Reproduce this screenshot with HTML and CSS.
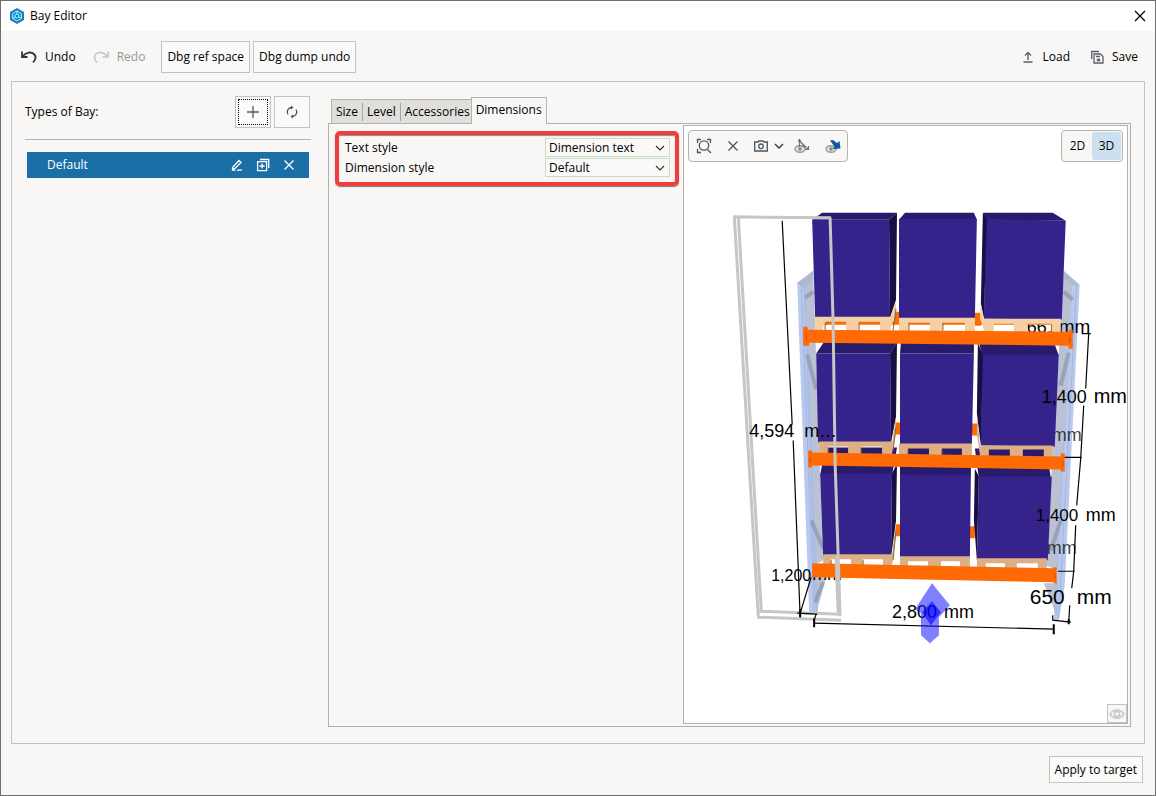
FILE: index.html
```html
<!DOCTYPE html>
<html lang="en">
<head>
<meta charset="utf-8">
<title>Bay Editor</title>
<link rel="stylesheet" href="styles.css">
</head>
<body>
<div class="window">
  <header class="titlebar">
    <svg class="logo" width="16" height="16" viewBox="0 0 16 16"><path d="M8 0l7 4v8l-7 4-7-4V4z" fill="#0d86c4"/><path d="M8 3l4.300 2.500v5L8 13l-4.300-2.500v-5zM8 3v3M3.700 10.500L6 9M12.300 10.500L10 9M8 6l2 1v2l-2 1.200L6 9V7z" fill="none" stroke="#c9e9fa" stroke-width="1"/></svg>
    <h1 class="title">Bay Editor</h1>
    <button class="close" aria-label="Close"><svg width="12" height="12" viewBox="0 0 12 12"><path d="M1 1l10 10M11 1L1 11" fill="none" stroke="#000" stroke-width="1.200"/></svg></button>
  </header>

  <div class="toolbar">
    <button class="flat"><svg width="18" height="16" viewBox="0 0 18 16"><path d="M2 2.500v5.500h5.500M2.500 7.500C6 3 11 2.500 14 5c2.300 2.300 1.800 5.500-1 8.500" fill="none" stroke="#333" stroke-width="1.800"/></svg>Undo</button>
    <button class="flat redo" disabled><svg width="18" height="16" viewBox="0 0 18 16"><path d="M16 2.500v5.500h-5.500M15.500 7.500C12 3 7 2.500 4 5c-2.300 2.300-1.800 5.500 1 8.500" fill="none" stroke="#c6c6c6" stroke-width="1.600"/></svg>Redo</button>
    <div class="debug">
      <button class="btn">Dbg ref space</button>
      <button class="btn">Dbg dump undo</button>
    </div>
    <div class="files">
      <button class="flat"><svg width="14" height="14" viewBox="0 0 14 14"><path d="M7 10V2.500M4 5.500l3-3 3 3M2.500 12h9" fill="none" stroke="#59636b" stroke-width="1.400"/></svg>Load</button>
      <button class="flat"><svg width="14" height="14" viewBox="0 0 14 14"><path d="M1.700 9V1.500H9M4 4h6.500L13 6.500V13H4zM6 6.500h4M7.500 9.500h2v1h-2z" fill="none" stroke="#59636b" stroke-width="1.300"/></svg>Save</button>
    </div>
  </div>

  <main class="frame">
    <section class="types">
      <div class="types-head">
        <h2 class="types-title">Types of Bay:</h2>
        <button class="btn square focused" aria-label="Add"><svg width="14" height="14" viewBox="0 0 14 14"><path d="M7 1v12M1 7h12" stroke="#555b60" stroke-width="1.300"/></svg></button>
        <button class="btn square" aria-label="Refresh"><svg width="14" height="14" viewBox="0 0 14 14"><path d="M6.500 2.500A4.500 4.500 0 0 0 3 9.500M7.500 11.500A4.500 4.500 0 0 0 11 4.500" fill="none" stroke="#4a5257" stroke-width="1.300"/><path d="M6 .5l2.500 2L6 4.500zM8 9.500l-2.500 2 2.500 2z" fill="#4a5257"/></svg></button>
      </div>
      <div class="bay">
        <span class="bay-name">Default</span>
        <button class="icon" aria-label="Rename"><svg width="14" height="14" viewBox="0 0 14 14"><path d="M3 9l6-6.500 2 2L5 10.500l-2.500.5zM2 12.200h3.500M7 12.200h5" fill="none" stroke="#fff" stroke-width="1.300"/></svg></button>
        <button class="icon" aria-label="Duplicate"><svg width="14" height="14" viewBox="0 0 14 14"><path d="M1.600 3.600h9v9h-9zM4 1.500h8.700V10M6.100 5.500v5M3.600 8h5" fill="none" stroke="#fff" stroke-width="1.300"/></svg></button>
        <button class="icon" aria-label="Delete"><svg width="14" height="14" viewBox="0 0 14 14"><path d="M2.500 2.500l9 9M11.500 2.500l-9 9" fill="none" stroke="#fff" stroke-width="1.300"/></svg></button>
      </div>
    </section>

    <section class="editor">
      <nav class="tabs" role="tablist">
        <button class="tab" role="tab">Size</button>
        <button class="tab" role="tab">Level</button>
        <button class="tab" role="tab">Accessories</button>
        <button class="tab active" role="tab" aria-selected="true">Dimensions</button>
      </nav>
      <div class="page">
        <div class="form-side">
          <form class="styles">
            <label for="text-style">Text style</label>
            <div class="combo">
              <select id="text-style"><option>Dimension text</option></select>
              <svg class="chevron" width="10" height="6" viewBox="0 0 10 6"><path d="M1 1l4 4 4-4" fill="none" stroke="#333" stroke-width="1.200"/></svg>
            </div>
            <label for="dim-style">Dimension style</label>
            <div class="combo">
              <select id="dim-style"><option>Default</option></select>
              <svg class="chevron" width="10" height="6" viewBox="0 0 10 6"><path d="M1 1l4 4 4-4" fill="none" stroke="#333" stroke-width="1.200"/></svg>
            </div>
          </form>
        </div>

        <div class="view">
          <svg class="scene" viewBox="684 125 443 598" role="img" aria-label="3D bay view">
            <!-- uprights -->
            <g fill="#a8b2c8" fill-opacity=".8">
              <path d="M803 279l10-9 10 290-10 5zM813 577h13l-10 37z"/>
              <path d="M1064 270l9 14-15 286-12-5zM1044 583h14v35z"/>
            </g>
            <g fill="#a7bbea" fill-opacity=".8">
              <path d="M797 282l8-3 13 335-9-1z"/>
              <path d="M1073 280l7 4-15 301-6 35-5-1z"/>
            </g>
            <path d="M797 282l16-12v10l-8 8zM1064 270l16 14-7 1-9-7z" fill="#afbad2"/>
            <path d="M805 297l8-6M807 354l9 35M811 520l12 28M1064 291l9 8M1069 352l-8 33M1061 520l-10 30M815 602l8-20" stroke="#8994b0" stroke-width="4" stroke-opacity=".7"/>
            <path d="M801 283l13 330M1077 284l-18 334" stroke="#8fa4d7" stroke-opacity=".55"/>
            <g class="dim">
              <text x="1027" y="332" font-size="18">661</text><text x="1059" y="332" font-size="19">mm</text>
              <g fill-opacity=".75">
                <text x="1052" y="441" font-size="18">mm</text>
                <text x="1047" y="554" font-size="18">mm</text>
              </g>
              <text x="812" y="580" font-size="18">mm</text>
            </g>
            <!-- rear beams -->
            <path d="M822 320h233v4H822zM895 311h5v13h-5zM975 312h6v13h-6zM895 422h5v12h-5zM972 423h6v12h-6zM896 524h5v12h-5zM969 526h6v12h-6z" fill="#ff6a05"/>
            <!-- bottom row of cartons -->
            <path d="M820 475l5-28h72l-5 28zM900 475v-28h71v28zM979 478l-4-30h72l4 30z" fill="#281b6b"/>
            <path d="M820 473h72l-1 84h-68zM900 474h71l-1 84h-70zM979 476h73l-4 84h-71z" fill="#35228b"/>
            <path d="M892 473l5-10-1 58-5 36zM975 468l4 8-2 84-3-40z" fill="#190f45"/>
            <!-- middle row -->
            <path d="M816 353l8-12h73l-7 12zM900 353l1-12h73v12zM982 355l-3-14h75l5 14z" fill="#281b6b"/>
            <path d="M816 353h74l1 89h-73zM900 353h74l-2 91h-72zM982 354h77l-4 92-74-1z" fill="#35228b"/>
            <path d="M890 353l7-12-1 75-5 26zM978 342l5 13-2 90-4-32z" fill="#190f45"/>
            <!-- top row -->
            <path d="M812 219l10-7h75l-8 7zM899 219l6-7h69l3 7zM986 219l-3-7h70l13 8z" fill="#281b6b"/>
            <path d="M812 219h77l1 98h-75zM899 218h78l-2 100h-76zM986 218l80 2-4 99-78-1z" fill="#35228b"/>
            <path d="M889 219l8-7-1 87-6 18zM983 212l4 7-3 98-3-14z" fill="#190f45"/>
            <!-- pallets -->
            <path d="M815 316h75v14h-10v-9h-21v9h-13v-9h-21l-3 9h-7zM890 317l6-16v11l-6 18zM899 317h76v14h-10v-9h-22v9h-13v-9h-21v9h-10zM984 318h77v14h-9v-9h-24v9h-14v-9h-20v9h-10zM981 303l3 16v10l-4-12z" fill="#f7cfa4"/>
            <path d="M819 441h73v13h-10v-8h-21v8h-13v-8h-20v8h-9zM892 442l4-25v16l-4 20zM899 443h73v13h-10v-8h-20v8h-13v-8h-21v8h-9zM980 445h73v13h-9v-9h-21v9h-13v-9h-21v9h-9zM823 554h69v13h-9v-8h-20v8h-12v-8h-20v8h-8zM892 555l4-34v13l-4 31zM900 556h70v13h-10v-8h-19v8h-13v-8h-20v8h-8zM977 558h70v13h-9v-8h-21v8h-12v-8h-19v8h-9zM977 414l3 30v10l-3-20z" fill="#dcb084"/>
            <path d="M825 330v-6l4-3M859 330v-8M909 330v-8M943 330v-8M828 453v-6M861 453v-6M908 455v-6M942 455v-6M831 566v-6M863 566v-6M893 330l3-22M893 450l3-24M893 560l3-30" fill="none" stroke="#84613d"/>
            <!-- front beams -->
            <path d="M803 326h4l1 3 261 2v-2h4v19h-4v-3l-260-3v3h-6zM808 450h4v2l249 4v-3h4v18h-4v-2l-249-4v2h-4zM812 563l241 5 1-1h3v17l-4-2-241-5z" fill="#ff6a05"/>
            <path d="M806 333v6M1070 336v6M810 457v5M1063 461v5M1055 573v5" stroke="#c45208"/>
            <!-- selection outline -->
            <path d="M734 216l24 400M738 216l23 394M733 216l98 1M830 217l3 105 2 140 5 154M836 556l2 56M759 611l82 3M757 617l84 3" fill="none" stroke="#c6c6c6" stroke-width="3"/>
            <!-- dimension lines -->
            <path d="M782 220l10 204M793 440l7 177M797 613l20 1M800 613l11-36M816 614l-2 6M814 623l240 6M1082 333h9M1089 333l-3 55M1084 405l-3 53-4 47M1065 457h17M1076 525l-2 46-2 17M1058 571h17M1070 605l-1 17M1053 615v5l18 2" fill="none" stroke="#000" stroke-width="1.200"/>
            <path d="M800 609v8M814 618v9M1054 624v10M1069 619v5" stroke="#000" stroke-width="2"/>
            <g class="dim">
              <text x="749" y="437" font-size="18">4,594</text><text x="804" y="437" font-size="18">m…</text>
              <text x="771" y="581" font-size="16">1,200</text>
              <text x="892" y="618" font-size="18">2,800</text><text x="944" y="618" font-size="18">mm</text>
              <text x="1042" y="402" font-size="18">1,400</text><text x="1094" y="402" font-size="20">mm</text>
              <text x="1036" y="521" font-size="17">1,400</text><text x="1086" y="521" font-size="18">mm</text>
              <text x="1030" y="604" font-size="21">650</text><text x="1077" y="604" font-size="21">mm</text>
            </g>
            <!-- front direction marker -->
            <path d="M932 583l18 22-11 12v18l-9 8-9-8v-22l-6-4z" fill="#00f" fill-opacity=".5"/>
            <path d="M932 601l9 11-10 13-9-13z" fill="#00f" fill-opacity=".6"/>
          </svg>

          <div class="view-tools">
            <button class="icon" aria-label="Zoom to fit"><svg width="16" height="16" viewBox="0 0 16 16"><path d="M1.500 5V1.500H5M11 1.500h3.500V5M1.500 11v3.500H5M11.500 11.500l3.500 3.500" fill="none" stroke="#4b565e" stroke-width="1.300"/><circle cx="8" cy="7.500" r="4.700" fill="none" stroke="#4b565e" stroke-width="1.300"/></svg></button>
            <button class="icon" aria-label="Clear"><svg width="12" height="12" viewBox="0 0 12 12"><path d="M1.500 1.500l9 9M10.500 1.500l-9 9" stroke="#4b565e" stroke-width="1.300"/></svg></button>
            <button class="icon camera" aria-label="Camera"><svg width="14" height="14" viewBox="0 0 14 14"><path d="M.7 3H4l1-1h4l1 1h3.300v9H.7z" fill="none" stroke="#4b565e" stroke-width="1.300"/><circle cx="7" cy="7.300" r="2.300" fill="none" stroke="#4b565e" stroke-width="1.300"/></svg><svg width="10" height="6" viewBox="0 0 10 6"><path d="M1 1l4 4 4-4" fill="none" stroke="#333" stroke-width="1.300"/></svg></button>
            <button class="icon" aria-label="Show dimensions"><svg width="16" height="16" viewBox="0 0 16 16"><ellipse cx="6" cy="11" rx="5" ry="3.300" fill="#ddd" stroke="#999" stroke-width="1.400"/><circle cx="6" cy="11" r="1.700" fill="#888"/><path d="M5.500 9V2M4 3.500l1.500-2 1.500 2M6 3.500l8.500 8M14.500 8v3.500H11M9 9V6" fill="none" stroke="#65747a" stroke-width="1.200"/></svg></button>
            <button class="icon" aria-label="Show direction"><svg width="16" height="16" viewBox="0 0 16 16"><ellipse cx="6" cy="11" rx="5" ry="3.300" fill="#ddd" stroke="#999" stroke-width="1.400"/><circle cx="6" cy="11" r="1.700" fill="#888"/><path d="M5 2.500l3-.5 4 3 2.500-2 1 7.500-8 .5 2-2.500z" fill="#1257a5"/></svg></button>
          </div>
          <div class="modes">
            <button class="mode">2D</button>
            <button class="mode on">3D</button>
          </div>
          <button class="eye" aria-label="Visibility"><svg width="16" height="12" viewBox="0 0 16 12"><path d="M1 6c3.500-5.500 10.500-5.500 14 0-3.500 5.500-10.500 5.500-14 0z" fill="none" stroke="#c8c8c8" stroke-width="1.500"/><circle cx="8" cy="6" r="2.600" fill="none" stroke="#c8c8c8" stroke-width="1.500"/></svg></button>
        </div>
      </div>
    </section>
  </main>

  <footer class="footer"><button class="btn apply">Apply to target</button></footer>
</div>
</body>
</html>
```

FILE: styles.css
```css
* { box-sizing: border-box; }

body {
  margin: 0;
  font: 12px/16px "Open Sans", "Noto Sans", sans-serif;
  color: #000;
}

h1, h2 { margin: 0; font-size: inherit; font-weight: 400; }

button {
  display: flex;
  align-items: center;
  justify-content: center;
  margin: 0;
  padding: 0;
  border: 0;
  background: none;
  color: inherit;
  font: inherit;
  white-space: nowrap;
}

svg { flex: none; }

.window {
  display: flex;
  flex-direction: column;
  min-height: 100vh;
  border: 1px solid #6e6e6e;
  background: #f8f7f5;
}

.titlebar {
  display: flex;
  align-items: center;
  gap: 5px;
  height: 30px;
  padding: 0 9px 0 8px;
  background: #fff;
}

.close { margin-left: auto; }

.toolbar {
  display: flex;
  align-items: center;
  height: 50px;
  padding: 2px 17px 0 19px;
}

.flat { gap: 7px; }
.redo { margin-left: 16px; color: #979797; }
.debug { display: flex; gap: 3px; margin-left: 16px; }
.files { display: flex; gap: 20px; margin-left: auto; }
.files .flat { gap: 8px; }

.btn {
  height: 32px;
  padding: 0 5px;
  border: 1px solid #c3c3c2;
  background: #fafaf9;
}

.frame {
  display: flex;
  flex: 1;
  margin: 0 10px;
  border: 1px solid #c3c3c2;
}

.types { width: 316px; padding: 14px 17px 0 13px; }

.types-head {
  display: flex;
  align-items: center;
  gap: 3px;
  height: 44px;
  padding: 0 1px 12px 0;
  border-bottom: 1px solid #b4b4b3;
}

.types-title { margin-right: auto; }

.square { width: 36px; padding: 0; }
.focused { outline: 1px dotted #000; outline-offset: -4px; }

.bay {
  display: flex;
  align-items: center;
  gap: 12px;
  height: 26px;
  margin: 12px 2px 0;
  padding: 0 13px 0 20px;
  background: #1a6fa6;
  color: #fff;
}

.bay-name { margin-right: auto; }

.editor {
  display: flex;
  flex: 1;
  flex-direction: column;
  min-width: 0;
  padding: 15px 13px 16px 0;
}

.tabs { display: flex; align-items: flex-end; height: 26px; padding-left: 3px; }

.tab {
  height: 24px;
  padding: 0 4px;
  border-top: 1px solid #b4b4b3;
  background: #e1dfdb;
}

.tab:first-child { border-left: 1px solid #b4b4b3; }
.tab:nth-child(3) { padding-right: 1px; }

.tab:nth-child(-n+2)::after {
  content: "";
  width: 1px;
  height: 18px;
  margin: 0 -4px 0 4px;
  background: #a5a5a4;
}

.tab.active {
  position: relative;
  height: 27px;
  margin-bottom: -1px;
  padding: 0 4px 3px;
  border: 1px solid #b4b4b3;
  border-bottom: 0;
  background: #f8f7f5;
}

.page {
  display: flex;
  flex: 1;
  padding: 1px 2px 2px 6px;
  border: 1px solid #b0b0af;
}

.form-side { width: 348px; padding: 6px 4px 0 0; }

.styles {
  display: grid;
  grid-template-columns: 1fr 125px;
  align-items: center;
  padding: 3px 5px 4px 6px;
  border: 4px solid #f23c3e;
  border-radius: 5px;
  box-shadow: 0 1px 1px #777, inset 0 1px 1px #888;
}

.combo { position: relative; height: 20px; padding-bottom: 1px; }

.combo select {
  width: 100%;
  height: 19px;
  padding: 0 3px;
  border: 1px solid #c5ddc4;
  border-radius: 0;
  appearance: none;
  background: #faf9f7;
  color: #000;
  font: inherit;
}

.chevron { position: absolute; top: 7px; right: 5px; pointer-events: none; }

.view {
  position: relative;
  flex: 1;
  min-width: 0;
  border: 1px solid #b0b0af;
  background: #fff;
}

.scene { position: absolute; inset: 0; width: 100%; height: 100%; }
.dim { font-family: "Liberation Sans", sans-serif; fill: #000; }

.view-tools, .modes {
  position: absolute;
  top: 4px;
  display: flex;
  align-items: center;
  height: 32px;
  border: 1px solid #b4b4b3;
  border-radius: 4px;
  background: #f8f7f5;
}

.view-tools { left: 4px; gap: 15px; padding: 0 6px 0 7px; }
.camera { gap: 6px; }
.view-tools .camera { margin-right: -5px; }

.modes { right: 4px; padding: 0 1px; }
.mode { width: 29px; height: 28px; }
.mode.on { border-radius: 3px; background: #cbdfee; }

.eye {
  position: absolute;
  right: 0;
  bottom: 0;
  width: 20px;
  height: 19px;
  border: 1px solid #c3c3c2;
  background: #f8f7f5;
}

.footer { display: flex; justify-content: flex-end; padding: 12px; }
.footer .btn { height: 27px; }
```
